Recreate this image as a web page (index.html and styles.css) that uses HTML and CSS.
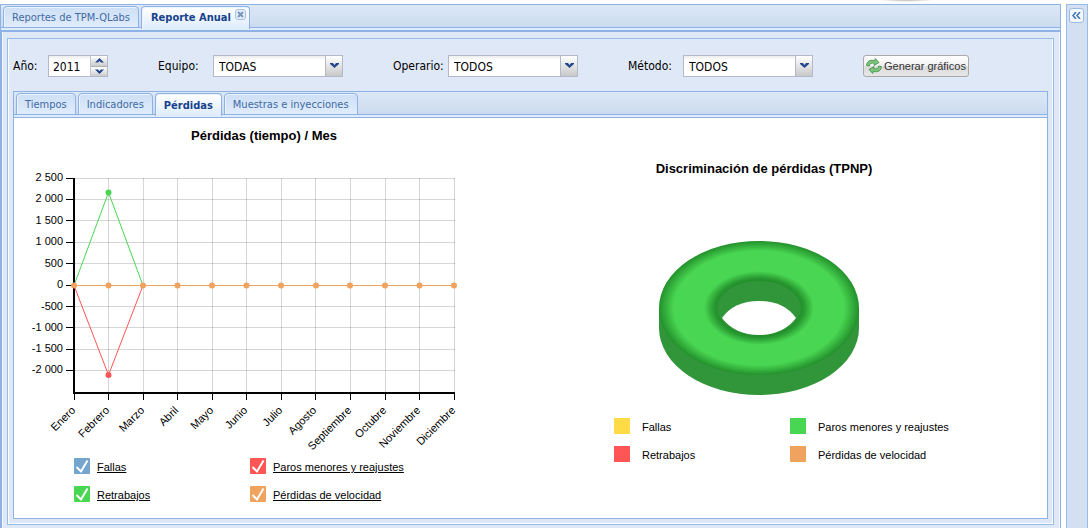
FILE: index.html
```
<!DOCTYPE html>
<html lang="es">
<head>
<meta charset="utf-8">
<title>Reporte Anual</title>
<link rel="stylesheet" href="styles.css">
</head>
<body>
<div class="page-top"></div>
<div class="layout">
  <main class="main-panel">
    <div class="tab-strip" role="tablist">
      <button class="tab" type="button" role="tab">Reportes de TPM-QLabs</button>
      <div class="tab tab-active tab-closable">
        <button class="tab-label" type="button" role="tab" aria-selected="true">Reporte Anual</button>
        <button class="tab-close" type="button" aria-label="Cerrar">
          <svg width="11" height="11" viewBox="0 0 11 11"><rect x=".5" y=".5" width="10" height="10" rx="2.5" fill="#e6effa" stroke="#a9c1e0"/><path d="M3 3l5 5M8 3l-5 5" stroke="#7795bd" stroke-width="2"/></svg>
        </button>
      </div>
    </div>
    <div class="main-body">
      <section class="report">
        <form class="filters">
          <div class="field field-year">
            <label for="anio">Año:</label>
            <div class="spinner">
              <input id="anio" type="text" value="2011">
              <div class="spinner-buttons">
                <button type="button" aria-label="Aumentar"><svg width="9" height="5" viewBox="0 0 9 5"><path d="M0 4.500L4.500 0L9 4.500H6L4.500 3L3 4.500Z" fill="#24478f"/></svg></button>
                <button type="button" aria-label="Disminuir"><svg width="9" height="5" viewBox="0 0 9 5"><path d="M0 .5L4.500 5L9 .5H6L4.500 2L3 .5Z" fill="#24478f"/></svg></button>
              </div>
            </div>
          </div>
          <div class="field field-team">
            <label for="equipo">Equipo:</label>
            <div class="combo"><select id="equipo"><option>TODAS</option></select><span class="combo-trigger"><svg width="9" height="6" viewBox="0 0 9 6"><path d="M0 0H3L4.500 2L6 0H9V1L4.500 5L0 1Z" fill="#24478f"/></svg></span></div>
          </div>
          <div class="field field-operator">
            <label for="operario">Operario:</label>
            <div class="combo"><select id="operario"><option>TODOS</option></select><span class="combo-trigger"><svg width="9" height="6" viewBox="0 0 9 6"><path d="M0 0H3L4.500 2L6 0H9V1L4.500 5L0 1Z" fill="#24478f"/></svg></span></div>
          </div>
          <div class="field field-method">
            <label for="metodo">Método:</label>
            <div class="combo"><select id="metodo"><option>TODOS</option></select><span class="combo-trigger"><svg width="9" height="6" viewBox="0 0 9 6"><path d="M0 0H3L4.500 2L6 0H9V1L4.500 5L0 1Z" fill="#24478f"/></svg></span></div>
          </div>
          <button class="generate" type="button">
            <svg width="16" height="16" viewBox="0 0 16 16"><g stroke="#3f8f48" stroke-width=".8" stroke-linejoin="round"><path d="M.6 7.500C.7 3.500 4 1.400 8.500 2.600L9.300 .6L13 4.600L8 7.400L8.300 5.400C5.500 4.600 3.700 5.500 3.300 8Z" fill="#7cc47c"/><path d="M15.400 8.500C15.300 12.500 12 14.600 7.500 13.400L6.700 15.400L3 11.400L8 8.600L7.700 10.600C10.500 11.400 12.300 10.500 12.700 8Z" fill="#7cc47c"/></g></svg>
            <span>Generar gráficos</span>
          </button>
        </form>
        <div class="tab-panel">
          <div class="tab-strip tab-strip-inner" role="tablist">
            <button class="tab" type="button" role="tab">Tiempos</button>
            <button class="tab" type="button" role="tab">Indicadores</button>
            <button class="tab tab-active" type="button" role="tab" aria-selected="true">Pérdidas</button>
            <button class="tab" type="button" role="tab">Muestras e inyecciones</button>
          </div>
          <div class="charts">
            <section class="chart">
              <h2 class="chart-title">Pérdidas (tiempo) / Mes</h2>
              <svg class="line-chart" width="500" height="308" viewBox="0 0 500 308" role="img" aria-label="Pérdidas por mes">
                <g transform="translate(60 28)">
                  <path class="grid" d="M0 .5H381M0 21.500H381M0 42.500H381M0 64.500H381M0 85.500H381M0 107.500H381M0 128.500H381M0 149.500H381M0 171.500H381M0 192.500H381M34.500 0V214M69.500 0V214M103.500 0V214M138.500 0V214M172.500 0V214M207.500 0V214M241.500 0V214M276.500 0V214M311.500 0V214M345.500 0V214M380.500 0V214"/>
                  <path class="ticks" d="M-8 .5H0M-8 21.500H0M-8 42.500H0M-8 64.500H0M-8 85.500H0M-8 107.500H0M-8 128.500H0M-8 149.500H0M-8 171.500H0M-8 192.500H0M.5 214V222M34.500 214V222M69.500 214V222M103.500 214V222M138.500 214V222M172.500 214V222M207.500 214V222M241.500 214V222M276.500 214V222M311.500 214V222M345.500 214V222M380.500 214V222"/>
                  <path class="axis" d="M0 0V215M-1 215H381"/>
                  <g class="axis-text">
                    <text x="-11" y="3">2 500</text><text x="-11" y="24">2 000</text><text x="-11" y="46">1 500</text><text x="-11" y="67">1 000</text><text x="-11" y="89">500</text><text x="-11" y="110">0</text><text x="-11" y="132">-500</text><text x="-11" y="153">-1 000</text><text x="-11" y="174">-1 500</text><text x="-11" y="195">-2 000</text>
                    <text transform="translate(2 233) rotate(-45)">Enero</text>
                    <text transform="translate(36 233) rotate(-45)">Febrero</text>
                    <text transform="translate(71 233) rotate(-45)">Marzo</text>
                    <text transform="translate(105 233) rotate(-45)">Abril</text>
                    <text transform="translate(140 233) rotate(-45)">Mayo</text>
                    <text transform="translate(174 233) rotate(-45)">Junio</text>
                    <text transform="translate(209 233) rotate(-45)">Julio</text>
                    <text transform="translate(243 233) rotate(-45)">Agosto</text>
                    <text transform="translate(278 233) rotate(-45)">Septiembre</text>
                    <text transform="translate(313 233) rotate(-45)">Octubre</text>
                    <text transform="translate(347 233) rotate(-45)">Noviembre</text>
                    <text transform="translate(382 233) rotate(-45)">Diciembre</text>
                  </g>
                  <path class="series series-red" d="M0 107.500L34.500 197L69 107.500"/>
                  <path class="series series-green" d="M0 107.500L34.500 14.500L69 107.500"/>
                  <path class="series series-orange" d="M0 107.500H380"/>
                  <circle cx="34.500" cy="197" r="3" fill="#ff5555"/>
                  <circle cx="34.500" cy="14.500" r="3" fill="#49d652"/>
                  <g fill="#f0a35e"><circle cx="0" cy="107.500" r="3"/><circle cx="34.500" cy="107.500" r="3"/><circle cx="69" cy="107.500" r="3"/><circle cx="103.500" cy="107.500" r="3"/><circle cx="138" cy="107.500" r="3"/><circle cx="172.500" cy="107.500" r="3"/><circle cx="207" cy="107.500" r="3"/><circle cx="242" cy="107.500" r="3"/><circle cx="276" cy="107.500" r="3"/><circle cx="311" cy="107.500" r="3"/><circle cx="345.500" cy="107.500" r="3"/><circle cx="380" cy="107.500" r="3"/></g>
                </g>
              </svg>
              <div class="legend legend-checks">
                <label class="check check-blue"><span class="check-box"><input type="checkbox" checked><svg width="16" height="16" viewBox="0 0 16 16"><path d="M2.500 9L7 13.500L13.500 2.500" /></svg></span><span class="check-text">Fallas</span></label>
                <label class="check check-red"><span class="check-box"><input type="checkbox" checked><svg width="16" height="16" viewBox="0 0 16 16"><path d="M2.500 9L7 13.500L13.500 2.500" /></svg></span><span class="check-text">Paros menores y reajustes</span></label>
                <label class="check check-green"><span class="check-box"><input type="checkbox" checked><svg width="16" height="16" viewBox="0 0 16 16"><path d="M2.500 9L7 13.500L13.500 2.500" /></svg></span><span class="check-text">Retrabajos</span></label>
                <label class="check check-orange"><span class="check-box"><input type="checkbox" checked><svg width="16" height="16" viewBox="0 0 16 16"><path d="M2.500 9L7 13.500L13.500 2.500" /></svg></span><span class="check-text">Pérdidas de velocidad</span></label>
              </div>
            </section>
            <section class="chart chart-pie">
              <h2 class="chart-title">Discriminación de pérdidas (TPNP)</h2>
              <svg class="pie" width="202" height="156" viewBox="0 0 202 156" role="img" aria-label="Paros menores y reajustes 100 %">
                <defs>
                  <radialGradient id="ring">
                    <stop offset=".42" stop-color="#23902b"/>
                    <stop offset=".45" stop-color="#289a31"/>
                    <stop offset=".55" stop-color="#49d652"/>
                    <stop offset=".85" stop-color="#49d652"/>
                    <stop offset=".98" stop-color="#289a31"/>
                    <stop offset="1" stop-color="#23902b"/>
                  </radialGradient>
                </defs>
                <path d="M1 68V88A100 67 0 0 0 201 88V68Z" fill="#319539"/>
                <ellipse cx="101" cy="68" rx="100" ry="67" fill="url(#ring)"/>
                <ellipse cx="101" cy="68" rx="42" ry="27" fill="#319539"/>
                <path d="M64 78Q76 61 101 61Q126 61 138 78Q125 95 101 95Q77 95 64 78Z" fill="#fff"/>
              </svg>
              <ul class="legend legend-swatches">
                <li><span class="swatch swatch-yellow"></span><span class="swatch-text">Fallas</span></li>
                <li><span class="swatch swatch-green"></span><span class="swatch-text">Paros menores y reajustes</span></li>
                <li><span class="swatch swatch-red"></span><span class="swatch-text">Retrabajos</span></li>
                <li><span class="swatch swatch-orange"></span><span class="swatch-text">Pérdidas de velocidad</span></li>
              </ul>
            </section>
          </div>
        </div>
      </section>
    </div>
  </main>
  <aside class="side-panel">
    <button class="expand" type="button" aria-label="Expandir">
      <svg width="9" height="7" viewBox="0 0 9 7"><path d="M4 0L1 3.500L4 7M8 0L5 3.500L8 7" fill="none" stroke="#3f78b4" stroke-width="1.600"/></svg>
    </button>
  </aside>
</div>
</body>
</html>
```
FILE: styles.css
```
* { box-sizing: border-box; }

body {
  display: flex;
  flex-direction: column;
  height: 100vh;
  margin: 0;
  overflow: hidden;
  background: #fff;
  color: #000;
  font: 11px/14px "DejaVu Sans Condensed", Tahoma, sans-serif;
}

button, input, select { margin: 0; font: inherit; }
button { padding: 0; border: 0; background: none; cursor: pointer; }
svg { display: block; }

.page-top {
  height: 4px;
  flex: none;
  background: radial-gradient(28px 2px at 83% 0, #bbb, #fff);
}

.layout {
  display: flex;
  flex: 1;
  gap: 5px;
  padding-right: 4px;
  min-height: 0;
}

.main-panel {
  display: flex;
  flex: 1;
  flex-direction: column;
  min-width: 0;
  border: solid #8db2e3;
  border-width: 1px 1px 0;
}

/* Tabs */
.tab-strip {
  display: flex;
  flex: none;
  gap: 2px;
  height: 27px;
  padding: 1px 2px 0;
  border-bottom: 2px solid #8db2e3;
  background: linear-gradient(#dde8f6, #cbdbef 22px, #8db2e3 22px, #8db2e3 23px, #deecfd 23px);
}

.tab-strip-inner {
  height: 26px;
  border-bottom-width: 1px;
}

.tab {
  height: 22px;
  padding: 2px 8px 0;
  border: 1px solid #8db2e3;
  border-radius: 4px 4px 0 0;
  background: linear-gradient(#cedff5, #dfecfc);
  box-shadow: inset 1px 1px #eaf3fe;
  color: #416aa3;
  white-space: nowrap;
}

.tab-active {
  height: 23px;
  border-bottom: 0;
  background: linear-gradient(#fff, #deecfd);
  color: #15428b;
  font-weight: bold;
}

.tab-closable {
  display: flex;
  align-items: flex-start;
  gap: 4px;
  padding: 2px 3px 0 9px;
}

.tab-label { height: 18px; color: inherit; }

/* Report */
.main-body {
  display: flex;
  flex: 1;
  padding: 6px 6px 3px 5px;
  min-height: 0;
  border: solid #8db2e3;
  border-width: 0 0 0 1px;
  background: #dfe8f6;
  box-shadow: inset 1px 0 #f2f7fd, inset -1px 0 #f2f7fd;
}

.report {
  display: flex;
  flex: 1;
  flex-direction: column;
  min-width: 0;
  padding: 0 5px 5px;
  border: 1px solid #99bbe8;
  box-shadow: inset 1px 0 #fff, inset -1px -1px #fff;
}

.filters {
  display: flex;
  flex: none;
  align-items: center;
  height: 52px;
  padding-top: 2px;
  font-size: 12px;
}

.field {
  display: flex;
  align-items: center;
  justify-content: space-between;
  height: 22px;
}

.field-year { width: 95px; margin-right: 50px; }
.field-team { width: 185px; margin-right: 50px; }
.field-operator { width: 185px; margin-right: 50px; }
.field-method { width: 185px; margin-right: 50px; }

.spinner {
  display: flex;
  width: 60px;
  height: 22px;
  border: 1px solid #b5b8c8;
}

.spinner input {
  width: 41px;
  padding: 1px 4px 0;
  border: 0;
  background: linear-gradient(#ececec, #fff 4px);
}

.spinner-buttons {
  display: flex;
  flex: 1;
  flex-direction: column;
  border-left: 1px solid #c4c6d0;
}

.spinner-buttons button {
  display: grid;
  flex: 1;
  place-items: center;
  background: linear-gradient(#fff, #ccc);
}

.spinner-buttons button + button { border-top: 1px solid #b0b0b0; }

.combo {
  display: grid;
  width: 130px;
  height: 22px;
}

.combo select,
.combo-trigger { grid-area: 1 / 1; }

.combo select {
  appearance: none;
  width: 100%;
  height: 22px;
  padding: 1px 20px 0 5px;
  border: 1px solid #b5b8c8;
  border-radius: 0;
  background: linear-gradient(#ececec, #fff 4px);
  color: #000;
}

.combo-trigger {
  display: grid;
  place-items: center;
  place-self: stretch end;
  width: 18px;
  border: 1px solid #b5b8c8;
  background: linear-gradient(#fff, #e4e4e4 50%, #c8c8c8);
  pointer-events: none;
}

.generate {
  display: flex;
  align-items: center;
  gap: 2px;
  height: 22px;
  padding: 0 2px;
  border: 1px solid #a9a9a9;
  border-radius: 3px;
  background: linear-gradient(#fff, #f0f0f0 50%, #dcdcdc 52%, #e6e6e6);
  color: #333;
  font: 11px/14px "Liberation Sans", Arial, sans-serif;
  white-space: nowrap;
}

.tab-panel {
  display: flex;
  flex: 1;
  flex-direction: column;
  min-height: 0;
  border: 1px solid #8db2e3;
  background: #fff;
}

/* Charts */
.charts {
  display: flex;
  flex: 1;
  min-height: 0;
  font: 11px/14px "Liberation Sans", Arial, sans-serif;
}

.chart {
  flex: 0 1 500px;
  min-width: 0;
  padding-top: 10px;
}

.chart-pie { padding-top: 43px; }

.chart-title {
  margin: 0;
  font-size: 13px;
  font-weight: bold;
  line-height: 16px;
  text-align: center;
}

.line-chart { margin-top: 6px; }
.pie { margin: 63px 0 0 144px; }

.grid { fill: none; stroke: #000; stroke-opacity: .16; }
.ticks { fill: none; stroke: #000; }
.axis { fill: none; stroke: #000; stroke-width: 2; }
.axis-text { text-anchor: end; }

.series { fill: none; stroke-width: 1; }
.series-red { stroke: #ff5555; }
.series-green { stroke: #49d652; }
.series-orange { stroke: #f0a35e; }

.legend {
  display: grid;
  grid-template-columns: 176px auto;
  row-gap: 12px;
  margin: 0;
  padding: 0 0 0 60px;
  list-style: none;
}

.check {
  display: flex;
  align-items: center;
  gap: 7px;
  height: 16px;
}

.check-box { display: grid; }
.check-box > * { grid-area: 1 / 1; }

.check-box input {
  appearance: none;
  width: 16px;
  height: 16px;
  border-radius: 1px;
}

.check-box svg {
  fill: none;
  stroke: #fff;
  stroke-width: 2;
  pointer-events: none;
}

.check-box input:not(:checked) + svg { visibility: hidden; }
.check-text, .swatch-text { padding-top: 2px; }
.check-text { text-decoration: underline; }

.check-blue input { background: #74a5cd; }
.check-red input { background: #ff5555; }
.check-green input { background: #49d652; }
.check-orange input { background: #f0a35e; }

.legend-swatches {
  margin-top: 22px;
  padding-left: 100px;
}

.legend-swatches li {
  display: flex;
  align-items: center;
  gap: 12px;
  height: 16px;
}

.swatch { width: 16px; height: 16px; }
.swatch-yellow { background: #ffdc46; }
.swatch-green { background: #49d652; }
.swatch-red { background: #ff5555; }
.swatch-orange { background: #f0a35e; }

/* Collapsed side panel */
.side-panel {
  flex: none;
  width: 22px;
  padding: 3px 2px;
  border: solid #99bbe8;
  border-width: 1px 1px 0;
  background: #d2e0f1;
}

.expand {
  display: grid;
  place-items: center;
  width: 15px;
  height: 15px;
  border: 1px solid #99bbe8;
  border-radius: 3px;
  background: #f4f8fd;
}
```
